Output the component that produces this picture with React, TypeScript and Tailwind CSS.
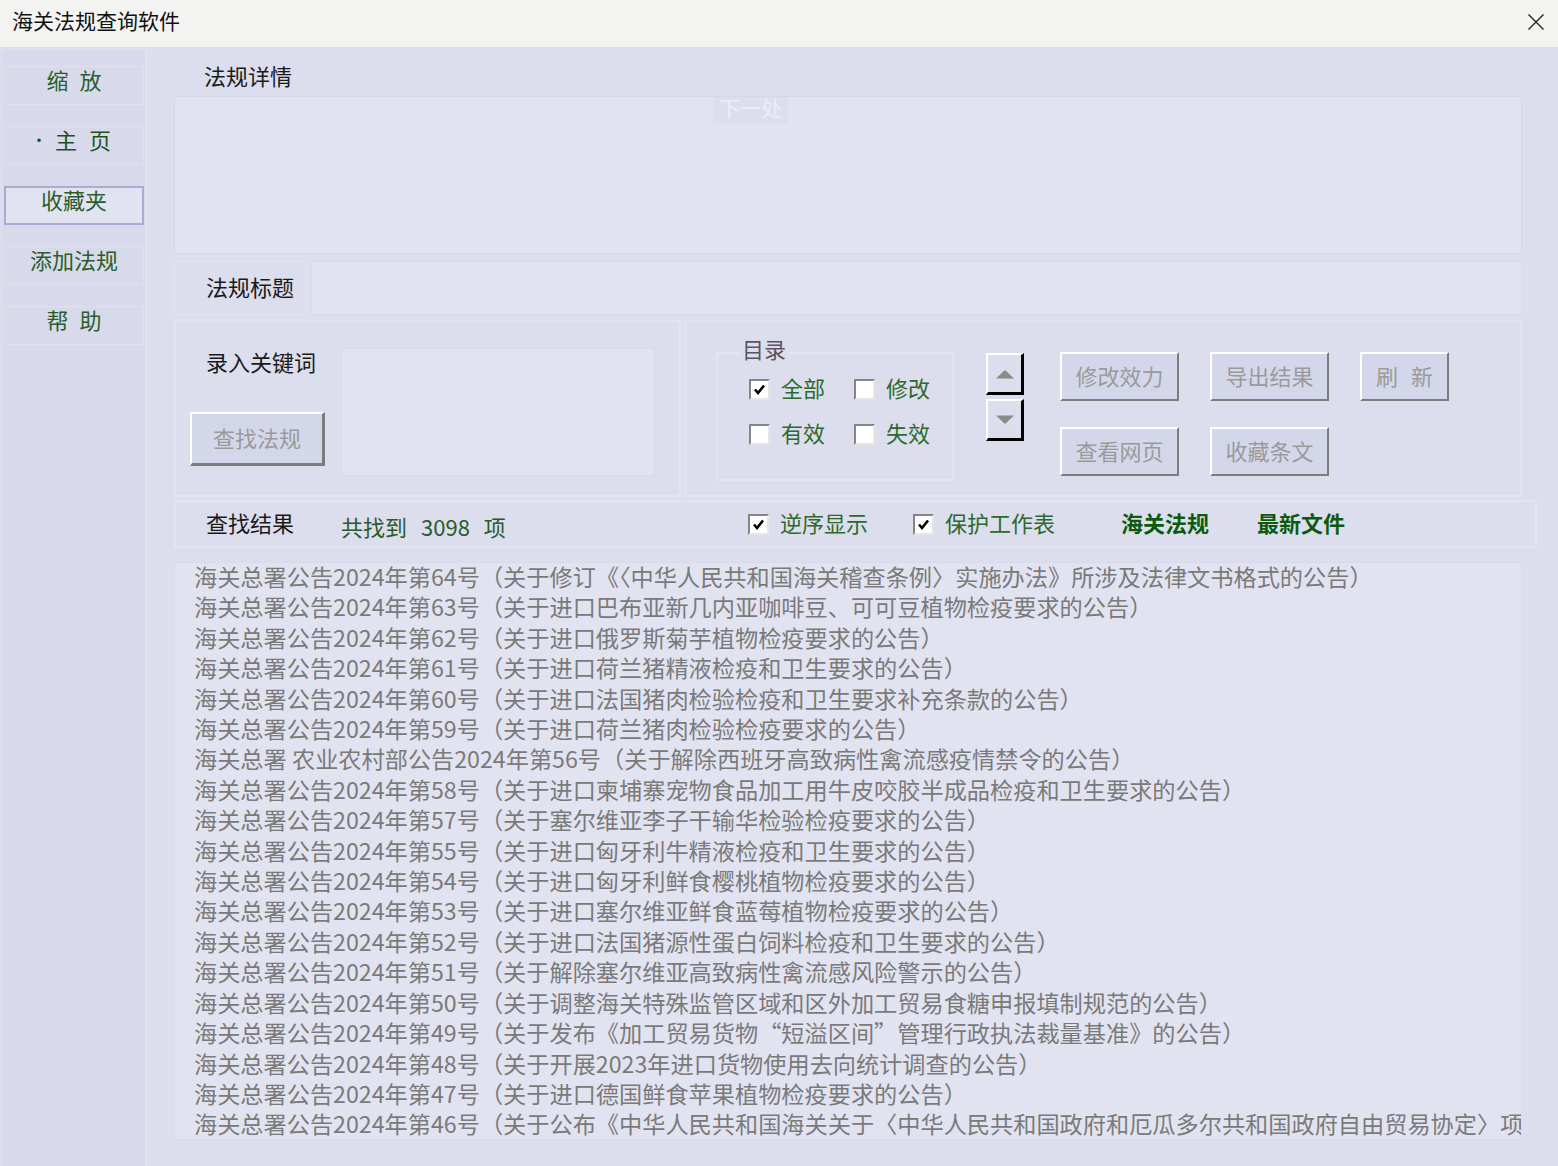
import React from "react";

const FONT = { fontFamily: "'Noto Sans CJK SC', 'Noto Sans', 'DejaVu Sans', sans-serif" };

const laws = [
  "海关总署公告2024年第64号（关于修订《〈中华人民共和国海关稽查条例〉实施办法》所涉及法律文书格式的公告）",
  "海关总署公告2024年第63号（关于进口巴布亚新几内亚咖啡豆、可可豆植物检疫要求的公告）",
  "海关总署公告2024年第62号（关于进口俄罗斯菊芋植物检疫要求的公告）",
  "海关总署公告2024年第61号（关于进口荷兰猪精液检疫和卫生要求的公告）",
  "海关总署公告2024年第60号（关于进口法国猪肉检验检疫和卫生要求补充条款的公告）",
  "海关总署公告2024年第59号（关于进口荷兰猪肉检验检疫要求的公告）",
  "海关总署 农业农村部公告2024年第56号（关于解除西班牙高致病性禽流感疫情禁令的公告）",
  "海关总署公告2024年第58号（关于进口柬埔寨宠物食品加工用牛皮咬胶半成品检疫和卫生要求的公告）",
  "海关总署公告2024年第57号（关于塞尔维亚李子干输华检验检疫要求的公告）",
  "海关总署公告2024年第55号（关于进口匈牙利牛精液检疫和卫生要求的公告）",
  "海关总署公告2024年第54号（关于进口匈牙利鲜食樱桃植物检疫要求的公告）",
  "海关总署公告2024年第53号（关于进口塞尔维亚鲜食蓝莓植物检疫要求的公告）",
  "海关总署公告2024年第52号（关于进口法国猪源性蛋白饲料检疫和卫生要求的公告）",
  "海关总署公告2024年第51号（关于解除塞尔维亚高致病性禽流感风险警示的公告）",
  "海关总署公告2024年第50号（关于调整海关特殊监管区域和区外加工贸易食糖申报填制规范的公告）",
  "海关总署公告2024年第49号（关于发布《加工贸易货物“短溢区间”管理行政执法裁量基准》的公告）",
  "海关总署公告2024年第48号（关于开展2023年进口货物使用去向统计调查的公告）",
  "海关总署公告2024年第47号（关于进口德国鲜食苹果植物检疫要求的公告）",
  "海关总署公告2024年第46号（关于公布《中华人民共和国海关关于〈中华人民共和国政府和厄瓜多尔共和国政府自由贸易协定〉项下进口货物原产地管理办法》的公告）",
];

function CheckBox({ checked, label }: { checked?: boolean; label: string }) {
  return (
    <div className="flex items-center gap-[11px]">
      <div className="w-[21px] h-[21px] bg-white border-2 border-t-[#858585] border-l-[#858585] border-b-[#e6e6e6] border-r-[#e6e6e6] flex items-center justify-center">
        {checked && (
          <svg width="13" height="13" viewBox="0 0 13 13">
            <path d="M2 6.5 L5 10 L11 2.5" stroke="#000" strokeWidth="2.6" fill="none" />
          </svg>
        )}
      </div>
      <span className="text-[22px] leading-[30px] pb-[4px] text-[#2c6a2c]">{label}</span>
    </div>
  );
}

function RaisedButton({ children, w }: { children: React.ReactNode; w: string }) {
  return (
    <div
      className={`${w} h-[49px] bg-[#d4d7e9] border-2 border-t-white border-l-white border-b-[#7c7c7c] border-r-[#7c7c7c] flex items-center justify-center pb-[2px] text-[22px] text-[#9a9a9a]`}
    >
      {children}
    </div>
  );
}

function SideItem({ children, active }: { children: React.ReactNode; active?: boolean }) {
  return (
    <div
      className={
        active
          ? "h-[39px] mx-[1px] border-2 border-[#a9abd4] bg-[#e1e3f1] flex justify-center leading-[22px] text-[22px] text-[#2a5d2a]"
          : "h-[39px] mx-[1px] border border-[#dfe1ee] flex justify-center leading-[24px] text-[22px] text-[#2a5d2a]"
      }
    >
      {children}
    </div>
  );
}

export default function App() {
  return (
    <div className="w-[1558px] h-[1166px] flex flex-col bg-[#dcdeee] overflow-hidden" style={FONT}>
      {/* title bar */}
      <div className="h-[47px] bg-[#f3f3f1] flex items-center justify-between pl-[12px] pr-[12px] shrink-0">
        <span className="text-[21px] text-[#111] pb-[6px]">海关法规查询软件</span>
        <svg width="18" height="18" viewBox="0 0 18 18" className="mr-[1px] mb-[4px]">
          <path d="M1.5 1.5 L16.5 16.5 M16.5 1.5 L1.5 16.5" stroke="#222" strokeWidth="1.4" />
        </svg>
      </div>

      <div className="flex flex-1 min-h-0">
        {/* sidebar */}
        <div className="w-[144px] ml-[3px] mt-[3px] bg-[#d8daeb] border-r-2 border-[#e0e2ef] flex flex-col gap-[21px] pt-[16px] shrink-0">
          <SideItem>
            <span className="flex gap-[11px]">
              <span>缩</span>
              <span>放</span>
            </span>
          </SideItem>
          <SideItem>
            <span className="flex gap-[12px] text-[#1d521d] -ml-[6px]">
              <span className="text-[16px] mr-[-4px]">·</span>
              <span>主</span>
              <span>页</span>
            </span>
          </SideItem>
          <SideItem active>收藏夹</SideItem>
          <SideItem>添加法规</SideItem>
          <SideItem>
            <span className="flex gap-[11px]">
              <span>帮</span>
              <span>助</span>
            </span>
          </SideItem>
        </div>

        {/* main */}
        <div className="flex flex-col pl-[27px]">
          <div className="h-[49px] pt-[13px] pl-[30px] leading-[30px] text-[22px] text-[#1a1a1a]">法规详情</div>

          <div className="relative w-[1348px] h-[158px] bg-[#e1e3f1] border border-[#d6d8e9]">
            <div className="absolute left-[538px] top-0 w-[75px] h-[27px] bg-[#dcdeee] text-[21px] leading-[21px] text-[#eceef6] text-center">
              下一处
            </div>
          </div>

          <div className="flex gap-[3px] mt-[7px] w-[1348px] h-[54px]">
            <div className="w-[134px] bg-[#dcdeee] border border-[#e2e4f1] flex items-center pl-[31px] pb-[3px] text-[22px] text-[#1a1a1a]">
              法规标题
            </div>
            <div className="flex-1 bg-[#e1e3f1] border border-[#d9dbeb]" />
          </div>

          <div className="flex gap-[3px] mt-[5px] w-[1348px] h-[177px]">
            {/* keyword panel */}
            <div className="w-[507px] border-2 border-[#e2e4f1] flex pl-[14px] pt-[26px]">
              <div className="w-[151px] flex flex-col">
                <div className="pl-[16px] leading-[26px] text-[22px] text-[#1a1a1a]">录入关键词</div>
                <div className="mt-[38px] w-[135px] h-[54px] bg-[#d4d7e9] border-2 border-t-white border-l-white border-b-[#7c7c7c] border-r-[#7c7c7c] border-r-[3px] border-b-[3px] flex items-center justify-center pb-[3px] text-[22px] text-[#9a9a9a]">
                  查找法规
                </div>
              </div>
              <div className="w-[313px] h-[128px] bg-[#e1e3f1] border border-[#d9dbeb]" />
            </div>

            {/* options panel */}
            <div className="flex-1 border-2 border-[#e2e4f1] flex pl-[30px] pt-[30px]">
              <div className="relative w-[238px] h-[129px] border-2 border-[#e3e5f2]">
                <span className="absolute left-[21px] top-[-20px] px-[3px] bg-[#dcdeee] text-[22px] leading-[28px] text-[#5e5260]">
                  目录
                </span>
                <div className="grid grid-cols-[105px_auto] gap-y-[11px] pl-[31px] pt-[18px]">
                  <CheckBox checked label="全部" />
                  <CheckBox label="修改" />
                  <CheckBox label="有效" />
                  <CheckBox label="失效" />
                </div>
              </div>

              <div className="ml-[32px] mt-[1px] flex flex-col gap-[4px]">
                <div className="w-[38px] h-[42px] bg-[#dcdeee] border-t-2 border-l-2 border-white border-r-[3px] border-b-[3px] border-r-black border-b-black flex items-center justify-center">
                  <svg width="20" height="10" viewBox="0 0 20 10">
                    <path d="M1 9.5 L10 1 L19 9.5 Z" fill="#8a8a8a" />
                  </svg>
                </div>
                <div className="w-[38px] h-[42px] bg-[#dcdeee] border-t-2 border-l-2 border-white border-r-[3px] border-b-[3px] border-r-black border-b-black flex items-center justify-center">
                  <svg width="20" height="10" viewBox="0 0 20 10">
                    <path d="M1 0.5 L10 9 L19 0.5 Z" fill="#8a8a8a" />
                  </svg>
                </div>
              </div>

              <div className="ml-[36px] grid grid-cols-[119px_119px_89px] gap-x-[31px] gap-y-[26px] content-start">
                <RaisedButton w="w-[119px]">修改效力</RaisedButton>
                <RaisedButton w="w-[119px]">导出结果</RaisedButton>
                <RaisedButton w="w-[89px]">
                  <span className="flex gap-[13px]">
                    <span>刷</span>
                    <span>新</span>
                  </span>
                </RaisedButton>
                <RaisedButton w="w-[119px]">查看网页</RaisedButton>
                <RaisedButton w="w-[119px]">收藏条文</RaisedButton>
              </div>
            </div>
          </div>

          {/* results bar */}
          <div className="mt-[3px] w-[1363px] h-[48px] border-2 border-[#e2e4f1] flex items-center pl-[30px]">
            <span className="w-[135px] text-[22px] text-[#1a1a1a] pb-[4px]">查找结果</span>
            <span className="w-[407px] flex gap-[14px] text-[22px] text-[#2a5a2a] pt-[4px]">
              <span>共找到</span>
              <span>3098</span>
              <span>项</span>
            </span>
            <div className="w-[165px]">
              <CheckBox checked label="逆序显示" />
            </div>
            <div className="w-[208px]">
              <CheckBox checked label="保护工作表" />
            </div>
            <span className="w-[136px] text-[22px] font-bold text-[#0d5a0d] pb-[4px]">海关法规</span>
            <span className="text-[22px] font-bold text-[#0d5a0d] pb-[4px]">最新文件</span>
          </div>

          {/* list */}
          <div className="mt-[14px] w-[1348px] h-[578px] bg-[#e1e3f1] border border-[#d9dbeb] overflow-hidden pl-[19px]">
            <div className="-mt-[2px]">
              {laws.map((t) => (
                <div key={t} className="whitespace-nowrap text-[23.2px] leading-[30.4px] text-[#7a7a7a]">
                  {t}
                </div>
              ))}
            </div>
          </div>
        </div>
      </div>
    </div>
  );
}
